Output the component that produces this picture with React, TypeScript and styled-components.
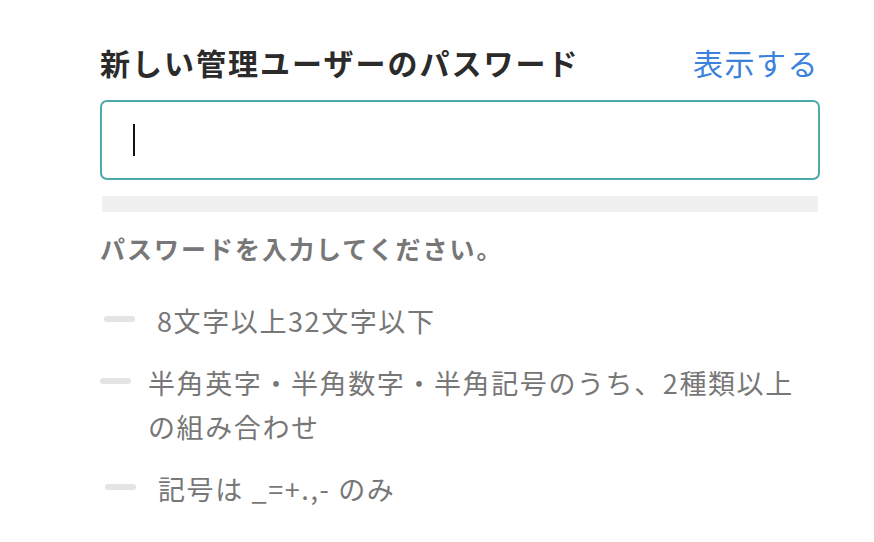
import React from 'react';
import styled, { createGlobalStyle } from 'styled-components';

const GlobalStyle = createGlobalStyle`
    body {
        margin: 0;
        background: #ffffff;
        font-family: "Noto Sans CJK JP", "Noto Sans", sans-serif;
    }
`;

const Page = styled.div`
    width: 720px;
    padding: 38px 0 0 100px;
    display: flex;
    flex-direction: column;
`;

const TitleRow = styled.div`
    display: flex;
    align-items: center;
    justify-content: space-between;
    height: 48px;
`;

const TitleP = styled.p`
    margin: 0;
    font-size: 30px;
    font-weight: 700;
    letter-spacing: 2px;
    color: #2b2b2b;
`;

const ToggleButton = styled.button`
    border: none;
    background: none;
    padding: 0;
    margin-right: 1px;
    font-family: inherit;
    font-size: 30px;
    letter-spacing: 1.5px;
    color: #3b82dc;
    cursor: pointer;
`;

const Field = styled.div`
    box-sizing: border-box;
    margin-top: 14px;
    height: 80px;
    border: 2px solid #4eaaa8;
    border-radius: 7px;
    display: flex;
    align-items: center;
    padding-left: 31px;
`;

const Caret = styled.span`
    width: 2px;
    height: 32px;
    background: #111111;
`;

const StrengthBar = styled.div`
    margin: 16px 2px 0 2px;
    height: 16px;
    background: #f0f0f0;
`;

const HelperP = styled.p`
    margin: 18px 0 0 0;
    font-size: 25px;
    font-weight: 700;
    letter-spacing: 2px;
    line-height: 36px;
    color: #777777;
`;

const RuleList = styled.ul`
    list-style: none;
    margin: 33px 0 0 0;
    padding: 0;
    display: flex;
    flex-direction: column;
    gap: 18px;
`;

const RuleItem = styled.li<{ $indent: number; $gap: number }>`
    display: flex;
    align-items: flex-start;
    padding-left: ${(p) => p.$indent}px;
    gap: ${(p) => p.$gap}px;
`;

const Dash = styled.span`
    flex: none;
    width: 31px;
    height: 6px;
    margin-top: 17px;
    border-radius: 3px;
    background: #e4e4e4;
`;

const RuleText = styled.span`
    font-size: 27px;
    letter-spacing: 1.6px;
    line-height: 44px;
    color: #777777;
    max-width: 665px;
`;

const rules = [
    { text: '8文字以上32文字以下', indent: 4, gap: 22 },
    { text: '半角英字・半角数字・半角記号のうち、2種類以上の組み合わせ', indent: 0, gap: 17 },
    { text: '記号は _=+.,- のみ', indent: 5, gap: 22 },
];

const App: React.FC = () => {
    return (
        <Page>
            <GlobalStyle />
            <TitleRow>
                <TitleP>新しい管理ユーザーのパスワード</TitleP>
                <ToggleButton>表示する</ToggleButton>
            </TitleRow>
            <Field>
                <Caret />
            </Field>
            <StrengthBar />
            <HelperP>パスワードを入力してください。</HelperP>
            <RuleList>
                {rules.map((r) => (
                    <RuleItem key={r.text} $indent={r.indent} $gap={r.gap}>
                        <Dash />
                        <RuleText>{r.text}</RuleText>
                    </RuleItem>
                ))}
            </RuleList>
        </Page>
    );
};

export default App;
